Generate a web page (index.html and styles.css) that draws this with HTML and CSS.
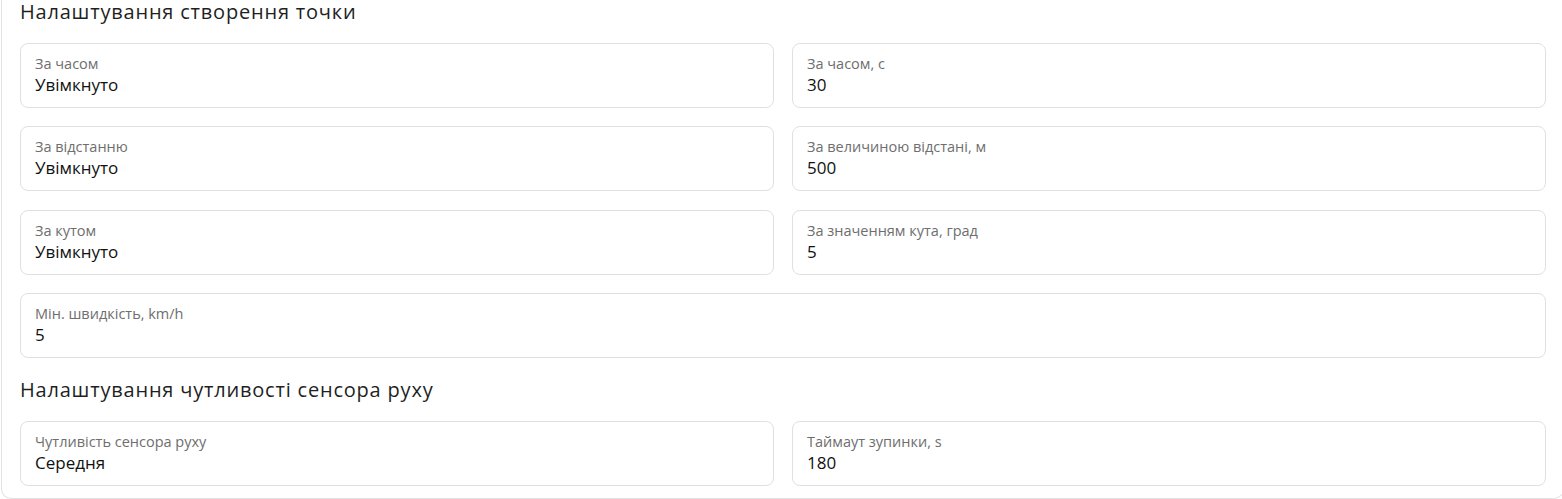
FILE: index.html
```html
<!DOCTYPE html>
<html lang="uk">
<head>
<meta charset="utf-8">
<title>Налаштування</title>
<link rel="stylesheet" href="styles.css">
</head>
<body>
<div class="panel">
  <h2 class="section-title first">Налаштування створення точки</h2>
  <div class="grid">
    <div class="field"><div class="label">За часом</div><div class="value">Увімкнуто</div></div>
    <div class="field"><div class="label">За часом, с</div><div class="value">30</div></div>
    <div class="field"><div class="label">За відстанню</div><div class="value">Увімкнуто</div></div>
    <div class="field"><div class="label">За величиною відстані, м</div><div class="value">500</div></div>
    <div class="field"><div class="label">За кутом</div><div class="value">Увімкнуто</div></div>
    <div class="field"><div class="label">За значенням кута, град</div><div class="value">5</div></div>
    <div class="field wide"><div class="label">Мін. швидкість, km/h</div><div class="value">5</div></div>
  </div>
  <h2 class="section-title">Налаштування чутливості сенсора руху</h2>
  <div class="grid">
    <div class="field"><div class="label">Чутливість сенсора руху</div><div class="value">Середня</div></div>
    <div class="field"><div class="label">Таймаут зупинки, s</div><div class="value">180</div></div>
  </div>
</div>
</body>
</html>
```

FILE: styles.css
```css
html, body {
  margin: 0;
  padding: 0;
  background: #ffffff;
  overflow: hidden;
}
body {
  font-family: "Open Sans", "Noto Sans", "Liberation Sans", sans-serif;
  color: #1c1c1c;
}
.panel {
  margin-left: 1px;
  width: calc(100% + 1px);
  box-sizing: border-box;
  border: 1px solid #e2e2e2;
  border-top: none;
  border-radius: 0 0 10px 10px;
  padding: 0 17px 12px 18px;
}
.section-title {
  margin: 0;
  font-size: 20px;
  font-weight: 400;
  line-height: 28px;
  letter-spacing: 0.8px;
  color: #1f1f1f;
  padding: 18px 0 17px;
}
.section-title.first {
  margin-top: -2px;
  padding-top: 0;
  padding-bottom: 17px;
}
.grid {
  display: grid;
  grid-template-columns: 1fr 1fr;
  column-gap: 18px;
  row-gap: 18.33px;
}
.field {
  border: 1px solid #e0e0e0;
  border-radius: 8px;
  padding: 12px 14px 11px;
  height: 65px;
  box-sizing: border-box;
}
.field.wide {
  grid-column: 1 / -1;
}
.label {
  font-size: 14.5px;
  line-height: 16px;
  color: #6e6e6e;
}
.value {
  font-size: 17px;
  line-height: 25px;
  color: #111111;
}
```
